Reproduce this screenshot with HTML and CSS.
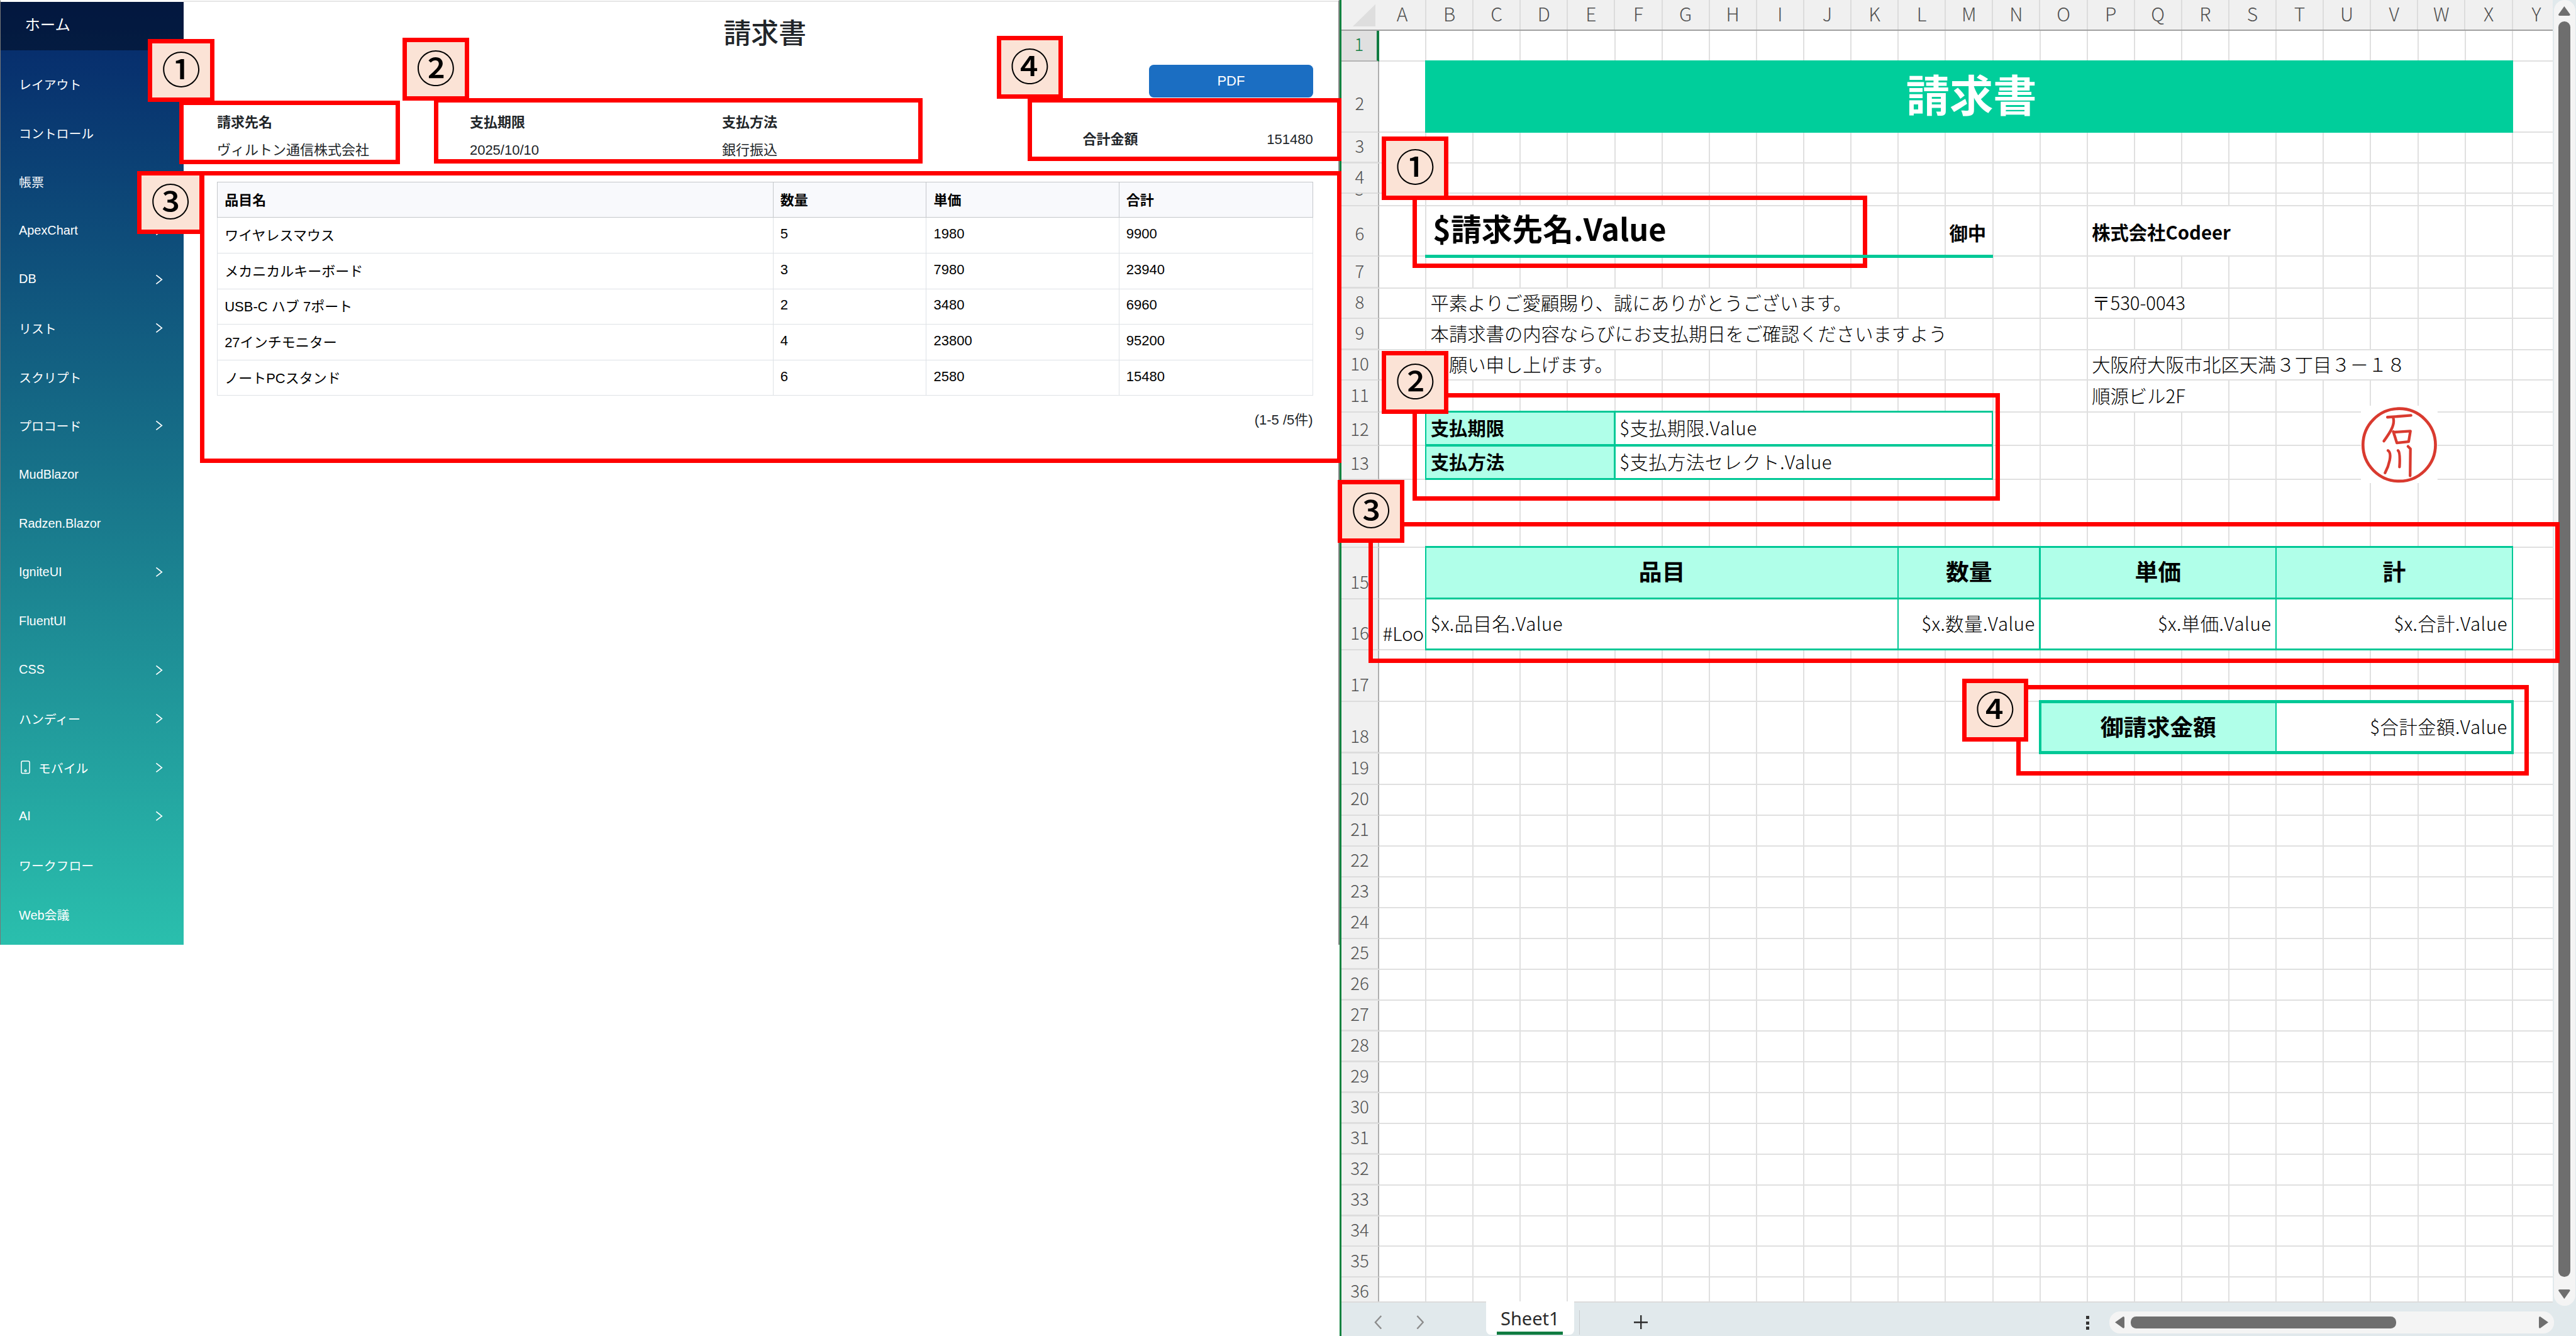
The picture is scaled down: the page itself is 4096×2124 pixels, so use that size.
FILE: index.html
```html
<!DOCTYPE html>
<html lang="ja">
<head>
<meta charset="utf-8">
<title>請求書</title>
<link rel="stylesheet" href="styles.css">
</head>
<body>
<div class="stage">
  <section class="app">
    <nav class="side">
      <div class="home">ホーム</div>
      <ul class="menu">
        <li>レイアウト</li>
        <li>コントロール</li>
        <li>帳票</li>
        <li>ApexChart<svg class="chev" viewBox="0 0 14 18"><path d="M1.5 1.5 11 9 1.5 16.5"/></svg></li>
        <li>DB<svg class="chev" viewBox="0 0 14 18"><path d="M1.5 1.5 11 9 1.5 16.5"/></svg></li>
        <li>リスト<svg class="chev" viewBox="0 0 14 18"><path d="M1.5 1.5 11 9 1.5 16.5"/></svg></li>
        <li>スクリプト</li>
        <li>プロコード<svg class="chev" viewBox="0 0 14 18"><path d="M1.5 1.5 11 9 1.5 16.5"/></svg></li>
        <li>MudBlazor</li>
        <li>Radzen.Blazor</li>
        <li>IgniteUI<svg class="chev" viewBox="0 0 14 18"><path d="M1.5 1.5 11 9 1.5 16.5"/></svg></li>
        <li>FluentUI</li>
        <li>CSS<svg class="chev" viewBox="0 0 14 18"><path d="M1.5 1.5 11 9 1.5 16.5"/></svg></li>
        <li>ハンディー<svg class="chev" viewBox="0 0 14 18"><path d="M1.5 1.5 11 9 1.5 16.5"/></svg></li>
        <li><svg class="phone" viewBox="0 0 16 23"><rect x="1" y="1" width="14" height="21" rx="2.5"/><circle cx="8" cy="17.5" r="1.4"/></svg>モバイル<svg class="chev" viewBox="0 0 14 18"><path d="M1.5 1.5 11 9 1.5 16.5"/></svg></li>
        <li>AI<svg class="chev" viewBox="0 0 14 18"><path d="M1.5 1.5 11 9 1.5 16.5"/></svg></li>
        <li>ワークフロー</li>
        <li>Web会議</li>
      </ul>
    </nav>
    <main class="main">
      <h1>請求書</h1>
      <button class="pdf">PDF</button>
      <div class="info">
        <div class="field"><b>請求先名</b><span>ヴィルトン通信株式会社</span></div>
        <div class="field"><b>支払期限</b><span>2025/10/10</span></div>
        <div class="field"><b>支払方法</b><span>銀行振込</span></div>
        <div class="total"><b>合計金額</b><span>151480</span></div>
      </div>
      <table class="items">
        <thead><tr><th class="c1">品目名</th><th class="c2">数量</th><th class="c3">単価</th><th>合計</th></tr></thead>
        <tbody>
          <tr><td>ワイヤレスマウス</td><td>5</td><td>1980</td><td>9900</td></tr>
          <tr><td>メカニカルキーボード</td><td>3</td><td>7980</td><td>23940</td></tr>
          <tr><td>USB-C ハブ 7ポート</td><td>2</td><td>3480</td><td>6960</td></tr>
          <tr><td>27インチモニター</td><td>4</td><td>23800</td><td>95200</td></tr>
          <tr><td>ノートPCスタンド</td><td>6</td><td>2580</td><td>15480</td></tr>
        </tbody>
      </table>
      <div class="pager">(1-5 /5件)</div>
    </main>
  </section>

  <section class="excel">
    <div class="sheet">
      <div class="row head"><i class="corner"></i><span>A</span><span>B</span><span>C</span><span>D</span><span>E</span><span>F</span><span>G</span><span>H</span><span>I</span><span>J</span><span>K</span><span>L</span><span>M</span><span>N</span><span>O</span><span>P</span><span>Q</span><span>R</span><span>S</span><span>T</span><span>U</span><span>V</span><span>W</span><span>X</span><span class="last">Y</span></div>
      <div class="row r1"><b class="num active">1</b></div>
      <div class="row r2"><b class="num mid">2</b><div class="cell banner">請求書</div></div>
      <div class="row"><b class="num">3</b></div>
      <div class="row"><b class="num">4</b></div>
      <div class="row r5"><b class="num">5</b></div>
      <div class="row r6"><b class="num">6</b><div class="cell customer">$請求先名.Value</div><div class="cell onchu">御中</div><div class="cell company">株式会社Codeer</div><div class="rule"></div></div>
      <div class="row r7"><b class="num">7</b></div>
      <div class="row"><b class="num">8</b><div class="cell b-k">平素よりご愛顧賜り、誠にありがとうございます。</div><div class="cell p-r">〒530-0043</div></div>
      <div class="row r9"><b class="num">9</b><div class="cell b-m">本請求書の内容ならびにお支払期日をご確認くださいますよう</div></div>
      <div class="row"><b class="num">10</b><div class="cell b-e">お願い申し上げます。</div><div class="cell p-v">大阪府大阪市北区天満３丁目３－１８</div></div>
      <div class="row r11"><b class="num">11</b><div class="cell p-r">順源ビル2F</div></div>
      <div class="row r12"><b class="num">12</b><div class="cell box fill b-e">支払期限</div><div class="cell box mixed f-m">$支払期限.Value</div></div>
      <div class="row r13"><b class="num">13</b><div class="cell box fill b-e">支払方法</div><div class="cell box mixed f-m">$支払方法セレクト.Value</div></div>
      <div class="row r14"><b class="num">14</b></div>
      <div class="row r15"><b class="num">15</b><div class="cell box th b-k">品目</div><div class="cell box th l-n">数量</div><div class="cell box th o-s">単価</div><div class="cell box th t-x">計</div></div>
      <div class="row r15"><b class="num">16</b><div class="cell loop">#LoopRow</div><div class="cell box mixed b-k">$x.品目名.Value</div><div class="cell box mixed end l-n">$x.数量.Value</div><div class="cell box mixed end o-s">$x.単価.Value</div><div class="cell box mixed end t-x">$x.合計.Value</div></div>
      <div class="row r15"><b class="num">17</b></div>
      <div class="row r15"><b class="num">18</b><div class="cell box sum th o-s">御請求金額</div><div class="cell box sum sumval mixed end t-x">$合計金額.Value</div></div>
      <div class="row r7"><b class="num">19</b></div>
      <div class="row n"><b class="num">20</b></div>
      <div class="row n"><b class="num">21</b></div>
      <div class="row n"><b class="num">22</b></div>
      <div class="row n"><b class="num">23</b></div>
      <div class="row n"><b class="num">24</b></div>
      <div class="row n"><b class="num">25</b></div>
      <div class="row n"><b class="num">26</b></div>
      <div class="row n"><b class="num">27</b></div>
      <div class="row n"><b class="num">28</b></div>
      <div class="row n"><b class="num">29</b></div>
      <div class="row n"><b class="num">30</b></div>
      <div class="row n"><b class="num">31</b></div>
      <div class="row n"><b class="num">32</b></div>
      <div class="row n"><b class="num">33</b></div>
      <div class="row n"><b class="num">34</b></div>
      <div class="row n"><b class="num">35</b></div>
      <div class="row r36"><b class="num">36</b></div>
      <svg class="stamp" viewBox="0 0 130 132">
        <rect width="130" height="132" fill="#fff"/>
        <circle cx="65" cy="66.500" r="61.500" stroke-width="5"/>
        <path stroke-width="4.600" d="M45 19.500 85 16.500M55 21C58 33 49 46 39 60M55 44 61 63 81 61 84 43 55 45M46 76C54 81 47 103 41 114M63 76Q67 79 65.500 104M80 69 84 73 83.500 119"/>
      </svg>
    </div>
    <div class="vscroll">
      <div class="vtrack"><svg class="arrow" viewBox="0 0 20 16"><path d="M10 0 20 14Q20 16 18 16H2Q0 16 0 14Z"/></svg><div class="vthumb"></div><svg class="arrow" viewBox="0 0 20 16"><path d="M10 16 20 2Q20 0 18 0H2Q0 0 0 2Z"/></svg></div>
    </div>
    <div class="tabs">
      <svg class="nav" viewBox="0 0 84 24"><path d="M12 1 2 12 12 23M73 1 83 12 73 23"/></svg>
      <div class="tab"><span>Sheet1</span></div>
      <div class="sep"></div>
      <svg class="plus" viewBox="0 0 24 24"><path d="M12 0V24M0 12H24"/></svg>
      <div class="dots"><i></i><i></i><i></i></div>
      <div class="htrack"><svg class="harrow" viewBox="0 0 16 20"><path d="M0 10 14 0Q16 0 16 2V18Q16 20 14 20Z"/></svg><div class="hthumb"></div><svg class="harrow right" viewBox="0 0 16 20"><path d="M16 10 2 0Q0 0 0 2V18Q0 20 2 20Z"/></svg></div>
    </div>
  </section>

  <div class="frame f1"></div><div class="mark m1">①</div>
  <div class="frame f2"></div><div class="mark m2">②</div>
  <div class="frame f4"></div><div class="mark m4">④</div>
  <div class="frame f3"></div><div class="mark m3">③</div>
  <div class="frame g1"></div><div class="mark n1">①</div>
  <div class="frame g2"></div><div class="mark n2">②</div>
  <div class="frame g3"></div><div class="mark n3">③</div>
  <div class="frame g4"></div><div class="mark n4">④</div>
</div>
</body>
</html>
```
FILE: styles.css
```css
* { box-sizing: border-box; }
html, body { margin: 0; background: #fff; overflow: hidden; }
.stage {
  position: relative;
  zoom: 0.93708;
  width: 4371px;
  height: 2267px;
  display: flex;
  overflow: hidden;
  background: #fff;
  font-family: "Liberation Sans", "Noto Sans CJK JP", sans-serif;
  color: #000;
}

/* ---- invoice app ---- */
.app {
  width: 2273px;
  height: 1603px;
  display: flex;
  border-left: 1.1px solid #777;
  border-right: 2.2px solid #8a8a8a;
  border-top: 1.1px solid #fff;
}
.side {
  width: 311px;
  margin-top: 2px;
  flex: none;
  color: #fff;
  background: linear-gradient(180deg, #05276a 0%, #177289 50%, #2abfad 100%);
}
.home {
  height: 82px;
  padding-left: 41px;
  font-size: 26px;
  line-height: 80px;
  background: rgba(0, 0, 0, .4);
}
.menu { list-style: none; margin: 0; padding: 16px 0 0; }
.menu li {
  display: flex;
  align-items: center;
  height: 82.85px;
  padding: 0 34px 0 31px;
  font-size: 21.200px;
}
.chev { width: 14px; height: 18px; margin-left: auto; fill: none; stroke: #fff; stroke-width: 1.8; }
.phone { width: 16px; height: 23px; margin: 0 14px 0 3px; fill: none; stroke: #fff; stroke-width: 1.6; }
.main {
  flex: 1;
  padding: 25px 43px 0 56px;
  border-top: 2.2px solid #e6e6e6;
  display: flex;
  flex-direction: column;
  color: #212529;
  font-size: 23.5px;
}
h1 { margin: 0; font-size: 46.8px; line-height: 60px; font-weight: 500; text-align: center; }
.pdf {
  align-self: flex-end;
  width: 278px;
  height: 55px;
  margin-top: 22px;
  border: 0;
  border-radius: 8px;
  background: #1b6ec2;
  color: #fff;
  font: 23.5px "Liberation Sans", sans-serif;
}
.info {
  display: grid;
  grid-template-columns: 429px 428px 612px 1fr;
  margin-top: 19px;
  height: 124px;
  line-height: 47px;
}
.field { display: flex; flex-direction: column; }
.total { display: flex; justify-content: space-between; padding-top: 29px; }
.items { width: 100%; border-collapse: collapse; table-layout: fixed; color: #000; }
.items th, .items td { height: 60.4px; padding: 0 12px 4px; text-align: left; border: 1.600px solid #dee2e6; }
.items th { background: #f8f9fc; border-color: #c4c7cb; }
.c1 { width: 943px; }
.c2 { width: 260px; }
.c3 { width: 327px; }
.pager { margin-top: 27px; line-height: 28px; text-align: right; }

/* ---- spreadsheet ---- */
.excel {
  width: 2098px;
  display: grid;
  grid-template-columns: 2055px 1fr;
  grid-template-rows: 2210px 1fr;
  border-left: 3.300px solid #10823f;
  background: #e1e9ec;
  font-family: "Noto Sans CJK JP", sans-serif;
  font-weight: 300;
}
.sheet { position: relative; overflow: hidden; background: #fff; border-bottom: 2.2px solid #dcdcdc; }
.row {
  display: grid;
  grid-template-columns: 64px repeat(24, 80.16px) 1fr;
  grid-template-rows: 100%;
  height: 52.1px;
  border-bottom: 2.2px solid #e0e0e0;
  background: repeating-linear-gradient(to right, transparent 0 78.06px, #e0e0e0 78.06px 80.16px) 64px 0 no-repeat;
}
.head {
  height: 52px;
  border-bottom: 2.2px solid #a0a0a0;
  background: #f0f0f0;
  color: #505050;
  font-size: 32px;
  line-height: 46px;
  text-align: center;
}
.head span { border-right: 2.2px solid #dcdcdc; }
.head .last { border: 0; width: 80px; }
.corner { width: 39px; height: 38px; margin: 7px 0 0 19px; background: #dedede; clip-path: polygon(100% 0, 100% 100%, 0 100%); }
.num {
  grid-column: 1;
  grid-row: 1;
  display: flex;
  justify-content: center;
  align-items: flex-end;
  overflow: hidden;
  margin-bottom: -2px;
  padding-bottom: 3px;
  border-right: 2.2px solid #aeaeae;
  border-bottom: 2.2px solid #dcdcdc;
  background: #f0f0f0;
  color: #505050;
  font-size: 29.5px;
  font-weight: 300;
  line-height: 50px;
}
.active { background: #e0e0e0; color: #107c41; border-right: 4.300px solid #107c41; border-bottom-color: #b4b4b4; }
.mid { padding-bottom: 23px; }
.r1 { height: 52.7px; }
.r2 { height: 120.2px; }
.r5 { height: 21px; }
.r6 { height: 85.7px; }
.r6 .num { padding-bottom: 13px; }
.r7 { height: 53.6px; }
.r9 { height: 52.6px; }
.r11 { height: 54px; }
.r12 { height: 57px; }
.r13 { height: 57.5px; }
.r14 { height: 115px; }
.r15 { height: 87.1px; }
.n { height: 52.29px; }
.r36 { height: 52px; }

.cell {
  grid-row: 1;
  display: flex;
  align-items: center;
  margin-right: 2px;
  padding-left: 7px;
  background: #fff;
  font-size: 31.3px;
  line-height: 40px;
  padding-bottom: 3px;
  white-space: nowrap;
}
.b-k { grid-column: 3 / 13; }
.b-m { grid-column: 3 / 15; }
.b-e { grid-column: 3 / 7; }
.f-m { grid-column: 7 / 15; }
.p-r { grid-column: 17 / 20; }
.p-v { grid-column: 17 / 24; }
.l-n { grid-column: 13 / 16; }
.o-s { grid-column: 16 / 21; }
.t-x { grid-column: 21 / 26; }
.banner {
  grid-column: 3 / 26;
  margin: -2px 0 -2px -2px;
  justify-content: center;
  padding: 0 0 11px 8px;
  background: #00ce9b;
  color: #fff;
  font-size: 74px;
  line-height: 90px;
  font-weight: 700;
}
.customer { grid-column: 3 / 9; padding: 0 0 12px 11px; font-size: 52px; font-weight: 700; }
.onchu { grid-column: 14; justify-content: flex-end; padding: 6px 10px 0 0; font-weight: 700; background: none; }
.company { grid-column: 17 / 21; padding-top: 6px; font-weight: 700; }
.rule { grid-column: 3 / 15; grid-row: 1; align-self: end; height: 5.400px; margin: 0 0 -4px -2px; background: #00c896; z-index: 1; }
.box { margin: -3px 0 -2px -2px; border: solid #00c896; border-width: 3.300px 2.2px; padding-left: 7px; }
.fill { background: #b0ffe9; font-weight: 700; }
.mixed { letter-spacing: .55px; }
.th { background: #b0ffe9; font-weight: 700; justify-content: center; font-size: 39.300px; padding: 0 0 5px; }
.end { justify-content: flex-end; padding-right: 7px; }
.loop { grid-column: 2; overflow: hidden; padding: 30px 0 0 6px; margin-right: 0; }
.sum { border-width: 5.400px 2.2px 5.400px 4.300px; margin: -3px 0 -4px -3px; z-index: 1; padding-bottom: 4px; }
.sumval { border-width: 5.400px 4.300px 5.400px 2.2px; margin-right: -2px; margin-left: -2px; }
.stamp { position: absolute; left: 1730px; top: 688px; width: 130px; height: 132px; fill: none; stroke: #d93a2f; stroke-linecap: round; stroke-linejoin: round; }
.stamp rect { stroke: none; }

.vscroll { padding: 0 1px 0 2px; }
.vtrack {
  display: flex;
  flex-direction: column;
  align-items: center;
  justify-content: space-between;
  height: 2215px;
  padding: 11px 0;
  border-radius: 18px;
  background: #f4f4f4;
}
.vthumb { width: 20px; height: 2130px; margin-bottom: 12px; border-radius: 10px; background: #6e6e6e; }
.arrow { width: 20px; height: 16px; fill: #6e6e6e; }
.tabs { grid-column: 1 / 3; display: flex; align-items: flex-start; }
.nav { width: 84px; height: 24px; margin: 21px 0 0 56px; fill: none; stroke: #8c8c8c; stroke-width: 2.500; }
.tab {
  width: 150px;
  height: 57px;
  margin: -2px 0 0 105px;
  border-radius: 0 0 8px 8px;
  background: #fff;
  display: flex;
  justify-content: center;
  z-index: 1;
}
.tab span { height: 57px; padding: 0 6px; border-bottom: 5.400px solid #107c41; font: 31px/58px "Noto Sans", sans-serif; color: #2b2b2b; }
.sep { width: 2px; height: 42px; margin: 13px 0 0 8px; background: #c8cccf; }
.plus { width: 24px; height: 24px; margin: 21px 0 0 91px; stroke: #2b2b2b; stroke-width: 2.500; }
.dots { display: flex; flex-direction: column; gap: 4px; margin: 23px 0 0 744px; }
.dots i { width: 5px; height: 5px; background: #333; }
.htrack { width: 755px; height: 37px; margin: 15px 0 0 34px; padding: 0 10px; display: flex; align-items: center; border-radius: 18px; background: #f4f4f4; }
.hthumb { width: 451px; height: 20px; margin-left: 10px; border-radius: 9px; background: #6e6e6e; }
.harrow { width: 16px; height: 20px; fill: #6e6e6e; }
.right { margin-left: auto; }

/* ---- callouts over both windows ---- */
.frame { position: absolute; border: 7.500px solid #f00; }
.mark {
  position: absolute;
  width: 113px;
  height: 107px;
  border: 7.500px solid #f00;
  background: #fbe3d6;
  font: 500 66px/82px "Noto Sans CJK JP", sans-serif;
  text-align: center;
}
.m1 { left: 251px; top: 66px; }
.m2 { left: 683px; top: 64px; }
.m4 { left: 1691px; top: 61px; }
.m3 { left: 233px; top: 290px; }
.n1 { left: 2345px; top: 232px; }
.n2 { left: 2345px; top: 595px; }
.n3 { left: 2270px; top: 814px; }
.n4 { left: 3329px; top: 1151px; }
.f1 { left: 304px; top: 171px; width: 375px; height: 107px; }
.f2 { left: 736px; top: 166px; width: 830px; height: 112px; }
.f4 { left: 1744px; top: 166px; width: 532px; height: 107px; }
.f3 { left: 339px; top: 290px; width: 1937px; height: 495px; }
.g1 { left: 2397px; top: 332px; width: 771px; height: 123px; }
.g2 { left: 2397px; top: 667px; width: 997px; height: 182px; }
.g3 { left: 2322px; top: 886px; width: 2021px; height: 239px; }
.g4 { left: 3421px; top: 1162px; width: 870px; height: 154px; }
```
